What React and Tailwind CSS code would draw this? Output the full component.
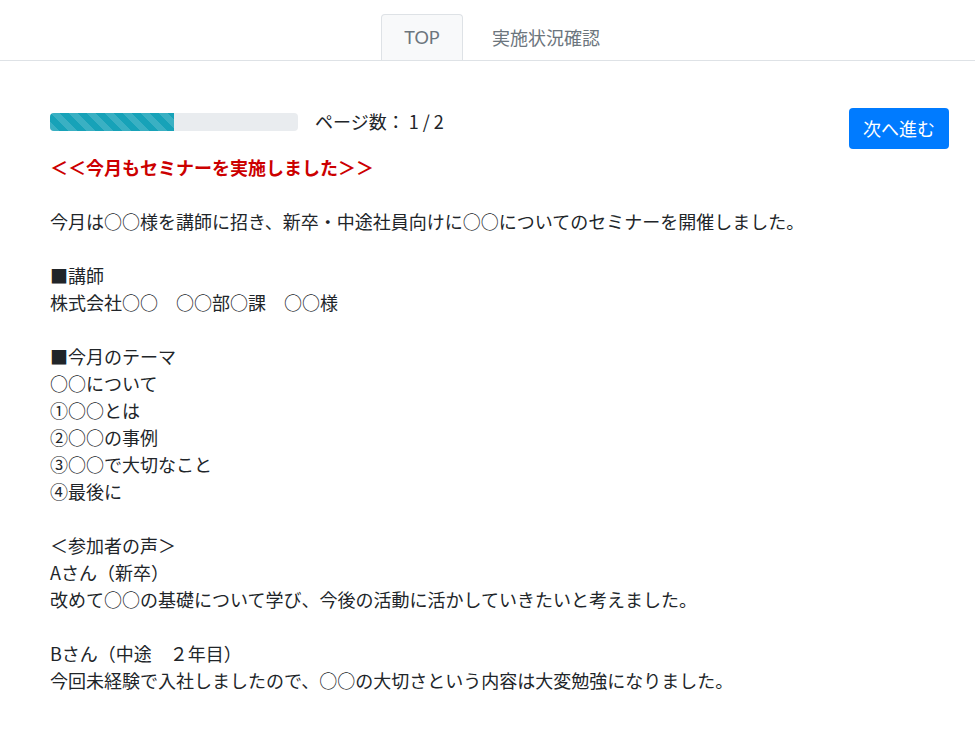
import React from 'react';

const lines = [
  '今月は○○様を講師に招き、新卒・中途社員向けに○○についてのセミナーを開催しました。',
  '',
  '■講師',
  '株式会社○○　○○部○課　○○様',
  '',
  '■今月のテーマ',
  '○○について',
  '①○○とは',
  '②○○の事例',
  '③○○で大切なこと',
  '④最後に',
  '',
  '＜参加者の声＞',
  'Aさん（新卒）',
  '改めて○○の基礎について学び、今後の活動に活かしていきたいと考えました。',
  '',
  'Bさん（中途　２年目）',
  '今回未経験で入社しましたので、○○の大切さという内容は大変勉強になりました。',
];

function Tabs() {
  return (
    <div className="flex justify-center border-b border-[#dee2e6] pt-[14px]">
      <div className="flex pl-[6px]">
        <div className="w-[82px] h-[46px] flex items-center justify-center border border-b-0 border-[#dee2e6] rounded-t-[4px] bg-[#f8f9fa] text-[#6c757d] font-['Lato',sans-serif]">
          TOP
        </div>
        <div className="h-[46px] flex items-center pl-[29px] text-[#6c757d]">実施状況確認</div>
      </div>
    </div>
  );
}

function Progress() {
  return (
    <div className="w-[248px] h-[18px] bg-[#e9ecef] rounded-[4px] overflow-hidden">
      <div className="w-1/2 h-full bg-[#17a2b8] bg-[linear-gradient(45deg,rgba(255,255,255,.15)_25%,transparent_25%,transparent_50%,rgba(255,255,255,.15)_50%,rgba(255,255,255,.15)_75%,transparent_75%,transparent)] bg-[length:18px_18px]" />
    </div>
  );
}

export default function App() {
  return (
    <div className="min-h-screen bg-white text-[18px] leading-[27px] text-[#212529] font-['Noto_Sans_CJK_JP','Noto_Sans',sans-serif]">
      <Tabs />
      <div className="pl-[50px] pr-[26px] pt-[47px] pb-10">
        <div className="flex items-start justify-between">
          <div className="flex items-center h-[27px] gap-[17px]">
            <Progress />
            <span>ページ数： 1 / 2</span>
          </div>
          <button className="h-[41px] px-[14px] rounded-[4px] bg-[#007bff] text-white">次へ進む</button>
        </div>
        <div className="mt-[5px] font-bold text-[#cc0000]">＜＜今月もセミナーを実施しました＞＞</div>
        <div className="h-[27px]" />
        {lines.map((l, i) =>
          l ? <div key={i}>{l}</div> : <div key={i} className="h-[27px]" />
        )}
      </div>
    </div>
  );
}
